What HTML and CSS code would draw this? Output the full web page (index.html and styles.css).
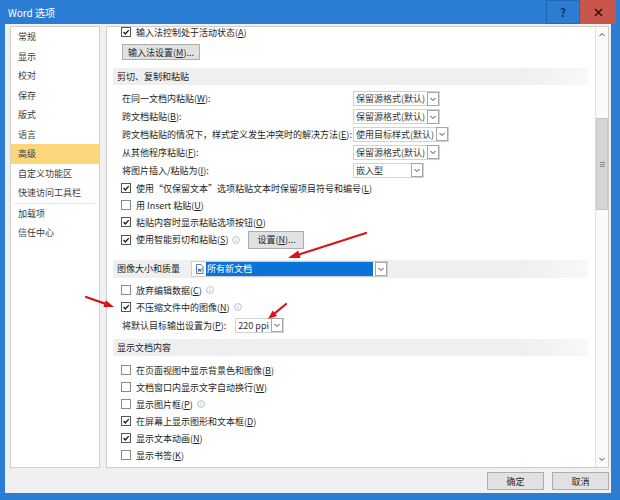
FILE: index.html
```html
<!DOCTYPE html>
<html lang="zh-CN">
<head>
  <meta charset="UTF-8" />
  <title>Word 选项</title>
  <link rel="stylesheet" href="styles.css">
</head>
<body>
  <div class="window">
    <header class="titlebar">
      <span class="title">Word 选项</span>
      <span class="tb-help">?</span>
      <span class="tb-close">
        <svg width="9" height="9" viewBox="0 0 9 9"><path d="M1 1 L8 8 M8 1 L1 8" stroke="#2a1410" stroke-width="1.6"/></svg>
      </span>
    </header>

    <div class="frame">
      <div class="panes">
        <nav class="sidebar">
          <div class="nav-item">常规</div>
          <div class="nav-item">显示</div>
          <div class="nav-item">校对</div>
          <div class="nav-item">保存</div>
          <div class="nav-item">版式</div>
          <div class="nav-item">语言</div>
          <div class="nav-item active">高级</div>
          <div class="nav-item">自定义功能区</div>
          <div class="nav-item">快速访问工具栏</div>
          <div class="nav-sep"></div>
          <div class="nav-item">加载项</div>
          <div class="nav-item">信任中心</div>
        </nav>

        <main class="panel">
          <div class="scroll-area">
            <div class="content">
              <div class="check-row"><span class="box on"><svg viewBox="0 0 10 10"><path d="M2 5 L4.2 7.4 L8.4 2.6"/></svg></span>输入法控制处于活动状态(<u>A</u>)</div>
              <div class="btn btn-ime">输入法设置(<u>M</u>)...</div>

              <div class="band band-cut">剪切、复制和粘贴</div>
              <div class="fields">
                <div class="field-row">
                  <span>在同一文档内粘贴(<u>W</u>):</span>
                  <span class="select"><span class="select-text">保留源格式(默认)</span><span class="select-arrow"><svg viewBox="0 0 8 8"><path d="M1.5 3 L4 5.5 L6.5 3"/></svg></span></span>
                </div>
                <div class="field-row">
                  <span>跨文档粘贴(<u>B</u>):</span>
                  <span class="select"><span class="select-text">保留源格式(默认)</span><span class="select-arrow"><svg viewBox="0 0 8 8"><path d="M1.5 3 L4 5.5 L6.5 3"/></svg></span></span>
                </div>
                <div class="field-row">
                  <span>跨文档粘贴的情况下，样式定义发生冲突时的解决方法(<u>E</u>):</span>
                  <span class="select"><span class="select-text">使用目标样式(默认)</span><span class="select-arrow"><svg viewBox="0 0 8 8"><path d="M1.5 3 L4 5.5 L6.5 3"/></svg></span></span>
                </div>
                <div class="field-row">
                  <span>从其他程序粘贴(<u>F</u>):</span>
                  <span class="select"><span class="select-text">保留源格式(默认)</span><span class="select-arrow"><svg viewBox="0 0 8 8"><path d="M1.5 3 L4 5.5 L6.5 3"/></svg></span></span>
                </div>
                <div class="field-row">
                  <span>将图片插入/粘贴为(<u>I</u>):</span>
                  <span class="select"><span class="select-text wide">嵌入型</span><span class="select-arrow"><svg viewBox="0 0 8 8"><path d="M1.5 3 L4 5.5 L6.5 3"/></svg></span></span>
                </div>
              </div>
              <div class="checks checks-paste">
                <div class="check-row"><span class="box on"><svg viewBox="0 0 10 10"><path d="M2 5 L4.2 7.4 L8.4 2.6"/></svg></span>使用“仅保留文本”选项粘贴文本时保留项目符号和编号(<u>L</u>)</div>
                <div class="check-row"><span class="box"></span>用 Insert 粘贴(<u>U</u>)</div>
                <div class="check-row"><span class="box on"><svg viewBox="0 0 10 10"><path d="M2 5 L4.2 7.4 L8.4 2.6"/></svg></span>粘贴内容时显示粘贴选项按钮(<u>O</u>)</div>
                <div class="check-row tall">
                  <span class="box on"><svg viewBox="0 0 10 10"><path d="M2 5 L4.2 7.4 L8.4 2.6"/></svg></span>使用智能剪切和粘贴(<u>S</u>)
                  <span class="info"><svg viewBox="0 0 8 8"><circle cx="4" cy="4" r="3.4"/><path d="M4 3.4 V6 M4 2 V2.6"/></svg></span>
                  <span class="btn btn-set">设置(<u>N</u>)...</span>
                </div>
              </div>

              <div class="band band-img">
                图像大小和质量
                <span class="doc-select">
                  <span class="doc-icon"><svg viewBox="0 0 9 10"><path d="M1.5 0.5 H6 L8 2.5 V9.5 H1.5 Z" fill="#fff" stroke="#5a7aa8"/><path d="M3 4.5 L3.8 7.5 L4.7 5 L5.6 7.5 L6.4 4.5" fill="none" stroke="#2b579a" stroke-width="0.9"/></svg></span>
                  <span class="doc-text">所有新文档</span>
                  <span class="select-arrow"><svg viewBox="0 0 8 8"><path d="M1.5 3 L4 5.5 L6.5 3"/></svg></span>
                </span>
              </div>
              <div class="checks checks-img">
                <div class="check-row"><span class="box"></span>放弃编辑数据(<u>C</u>)<span class="info"><svg viewBox="0 0 8 8"><circle cx="4" cy="4" r="3.4"/><path d="M4 3.4 V6 M4 2 V2.6"/></svg></span></div>
                <div class="check-row"><span class="box on"><svg viewBox="0 0 10 10"><path d="M2 5 L4.2 7.4 L8.4 2.6"/></svg></span>不压缩文件中的图像(<u>N</u>)<span class="info"><svg viewBox="0 0 8 8"><circle cx="4" cy="4" r="3.4"/><path d="M4 3.4 V6 M4 2 V2.6"/></svg></span></div>
                <div class="ppi-row">
                  <span>将默认目标输出设置为(<u>P</u>):</span>
                  <span class="select"><span class="select-text">220 ppi</span><span class="select-arrow"><svg viewBox="0 0 8 8"><path d="M1.5 3 L4 5.5 L6.5 3"/></svg></span></span>
                </div>
              </div>

              <div class="band band-show">显示文档内容</div>
              <div class="checks checks-show">
                <div class="check-row"><span class="box"></span>在页面视图中显示背景色和图像(<u>B</u>)</div>
                <div class="check-row"><span class="box"></span>文档窗口内显示文字自动换行(<u>W</u>)</div>
                <div class="check-row"><span class="box"></span>显示图片框(<u>P</u>)<span class="info"><svg viewBox="0 0 8 8"><circle cx="4" cy="4" r="3.4"/><path d="M4 3.4 V6 M4 2 V2.6"/></svg></span></div>
                <div class="check-row"><span class="box on"><svg viewBox="0 0 10 10"><path d="M2 5 L4.2 7.4 L8.4 2.6"/></svg></span>在屏幕上显示图形和文本框(<u>D</u>)</div>
                <div class="check-row"><span class="box on"><svg viewBox="0 0 10 10"><path d="M2 5 L4.2 7.4 L8.4 2.6"/></svg></span>显示文本动画(<u>N</u>)</div>
                <div class="check-row"><span class="box"></span>显示书签(<u>K</u>)</div>
                <div class="check-row"><span class="box"></span></div>
              </div>
            </div>
          </div>

          <div class="scrollbar">
            <div class="sb-arrow"><svg viewBox="0 0 8 8"><path d="M1.5 5 L4 2.5 L6.5 5"/></svg></div>
            <div class="sb-thumb"><span></span><span></span><span></span></div>
            <div class="sb-track"></div>
            <div class="sb-arrow"><svg viewBox="0 0 8 8"><path d="M1.5 3 L4 5.5 L6.5 3"/></svg></div>
          </div>
        </main>
      </div>

      <div class="buttons">
        <div class="btn btn-dlg">确定</div>
        <div class="btn btn-dlg">取消</div>
      </div>
    </div>
  </div>

  <!-- red annotation arrows drawn over the dialog -->
  <svg class="marks" width="620" height="500" viewBox="0 0 620 500">
    <line x1="366" y1="233" x2="299" y2="254.5"/>
    <polygon points="288,258 300.6,258.1 298.2,250.5"/>
    <line x1="86" y1="297" x2="105" y2="303.6"/>
    <polygon points="114,307 103.4,306.9 105.8,300.3"/>
    <line x1="286" y1="304" x2="275" y2="313.2"/>
    <polygon points="268,319 277.1,315.9 272.7,310.5"/>
  </svg>
</body>
</html>
```

FILE: styles.css
```css
* { box-sizing: border-box; margin: 0; padding: 0; }
body {
  background-color: #2b7cd3;
  color: #262626;
  font-family: "Noto Sans CJK SC", "Noto Sans", sans-serif;
  font-size: 9px;
  height: 500px;
  overflow: hidden;
  position: relative;
  width: 620px;
}
u { text-decoration: underline; text-underline-offset: 1px; }

/* title bar */
.titlebar {
  align-items: center;
  color: #fff;
  display: flex;
  height: 24px;
}
.title {
  flex: 1;
  font-size: 10px;
  padding-left: 8px;
}
.tb-help {
  align-items: center;
  border: 1px solid #2467b4;
  color: #1b2f4a;
  display: flex;
  font-size: 11px;
  font-weight: bold;
  height: 24px;
  justify-content: center;
  width: 34px;
}
.tb-close {
  align-items: center;
  background-color: #c9564c;
  display: flex;
  height: 24px;
  justify-content: center;
  margin-right: 4px;
  width: 36px;
}
.tb-close svg { width: 9px; height: 9px; }

/* dialog body */
.frame {
  background-color: #f0f0f0;
  display: flex;
  flex-direction: column;
  height: 469px;
  margin: 0 9px 7px 5px;
  padding: 2px 2px 0 5px;
}
.panes {
  display: flex;
  gap: 6px;
  height: 442px;
}
.sidebar {
  background-color: #fff;
  border: 1px solid #d0d0d0;
  width: 90px;
}
.nav-item {
  color: #3c3c3c;
  height: 19.5px;
  line-height: 19.5px;
  padding-left: 7px;
}
.nav-item.active { background-color: #fbd77c; }
.nav-sep {
  border-top: 1px solid #e4e4e4;
  margin: 0 3px;
}

.panel {
  background-color: #fff;
  border: 1px solid #cdcdcd;
  display: flex;
  flex: 1;
  overflow: hidden;
}
.scroll-area {
  flex: 1;
  overflow: hidden;
}
.content { margin-top: -3px; }

.check-row {
  align-items: center;
  display: flex;
  height: 17px;
  line-height: 11px;
  padding-left: 14px;
  white-space: nowrap;
}
.content > .check-row:first-child { height: 16px; }
.check-row.tall { height: 18px; }
.box {
  background-color: #fff;
  border: 1px solid #8a8a8a;
  display: inline-block;
  height: 10px;
  margin-right: 5px;
  width: 10px;
}
.box.on { border-color: #555; }
.box svg {
  display: block;
  fill: none;
  height: 8px;
  stroke: #1a1a1a;
  stroke-width: 1.7;
  width: 8px;
}
.info { margin-left: 4px; display: inline-flex; }
.info svg {
  fill: none;
  height: 8px;
  stroke: #9fb3c8;
  stroke-width: 0.8;
  width: 8px;
}

.btn {
  align-items: center;
  background-color: #e1e1e1;
  border: 1px solid #adadad;
  display: flex;
  justify-content: center;
}
.btn-ime {
  height: 16px;
  margin: 4px 0 0 15px;
  width: 78px;
}
.btn-set {
  height: 18px;
  margin-left: 8px;
  width: 56px;
}

.band {
  align-items: center;
  background: linear-gradient(to right, #efefef 85%, #f8f8f8);
  display: flex;
  height: 17px;
  margin: 0 7px 0 6px;
  padding-left: 4px;
}
.band-cut { margin-top: 8px; }
.band-img { margin-top: 11px; height: 18px; }
.band-show { margin-top: 5px; }

.fields { margin-top: 5px; }
.field-row {
  align-items: center;
  display: grid;
  grid-template-columns: 231px auto;
  height: 17.8px;
  padding-left: 15px;
}
.select {
  align-items: center;
  background-color: #fff;
  border: 1px solid #d2d2d2;
  display: inline-flex;
  height: 15px;
  justify-self: start;
}
.select-text {
  color: #333;
  padding: 0 2px;
}
.select-text.wide { width: 57px; }
.select-arrow {
  align-items: center;
  border: 1px solid #a6a6a6;
  display: inline-flex;
  height: 14px;
  justify-content: center;
  width: 12px;
}
.select-arrow svg,
.sb-arrow svg {
  fill: none;
  height: 8px;
  stroke: #444;
  stroke-width: 1;
  width: 8px;
}

.checks-paste { margin-top: 1px; }
.checks-img { margin-top: 4px; }
.checks-show { margin-top: 6px; }
.ppi-row {
  align-items: center;
  display: flex;
  gap: 9px;
  height: 17px;
  margin-top: 1px;
  padding-left: 15px;
}

.doc-select {
  align-items: center;
  background-color: #fff;
  border: 1px solid #cfcfcf;
  display: flex;
  height: 16px;
  margin-left: 11px;
  width: 197px;
}
.doc-icon {
  display: inline-flex;
  margin: 0 2px 0 3px;
}
.doc-icon svg { width: 9px; height: 10px; }
.doc-text {
  background-color: #0a74d6;
  color: #fff;
  flex: 1;
  height: 14px;
  line-height: 14px;
  margin-right: 2px;
  padding-left: 1px;
}

/* scrollbar */
.scrollbar {
  background-color: #fafafa;
  border-left: 1px solid #e2e2e2;
  display: flex;
  flex-direction: column;
  width: 13px;
}
.sb-arrow {
  align-items: center;
  display: flex;
  height: 16px;
  justify-content: center;
}
.sb-thumb {
  align-items: center;
  background-color: #d6d6d6;
  border: 1px solid #c6c6c6;
  display: flex;
  flex-direction: column;
  gap: 1px;
  height: 92px;
  justify-content: center;
  margin-top: 75px;
}
.sb-thumb span {
  background-color: #8a8a8a;
  height: 1px;
  width: 5px;
}
.sb-track { flex: 1; }

/* footer buttons */
.buttons {
  display: flex;
  gap: 8px;
  justify-content: flex-end;
  padding-top: 4px;
}
.btn-dlg {
  height: 18px;
  width: 57px;
}

.marks {
  left: 0;
  pointer-events: none;
  position: absolute;
  top: 0;
}
.marks line {
  stroke: #d4161c;
  stroke-linecap: round;
  stroke-width: 2.2;
}
.marks polygon { fill: #d4161c; }
```
